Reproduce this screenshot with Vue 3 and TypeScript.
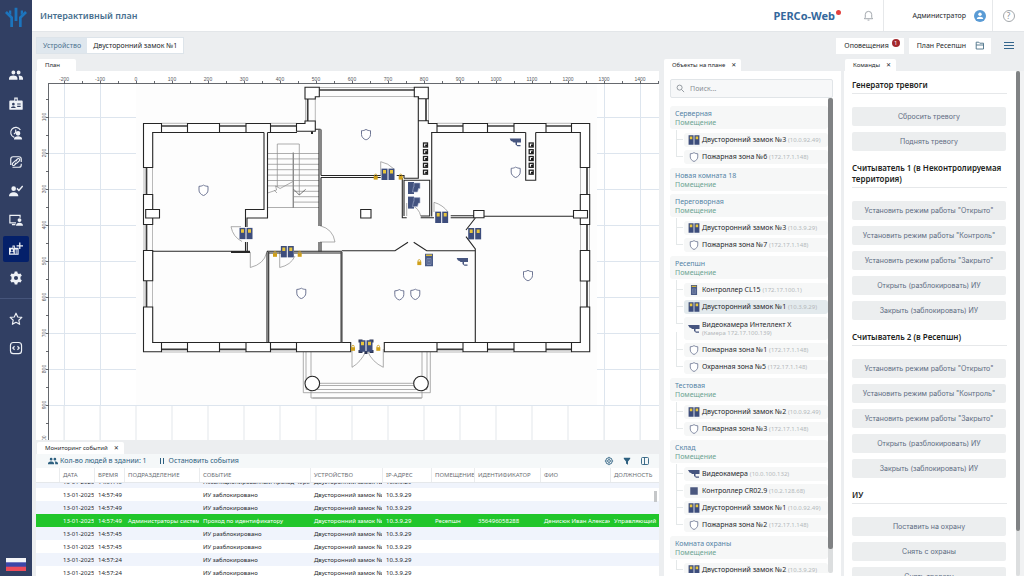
<script setup lang="ts">
import { ref } from 'vue'

type Kind = 'lock' | 'shield' | 'controller' | 'camera' | 'reader'
interface Device { kind: Kind; name: string; note: string; active?: boolean; stacked?: boolean }
interface Room { name: string; devices: Device[] }
interface EventRow { date: string; time: string; dept: string; event: string; device: string; ip: string; room: string; id: string; person: string; post: string; pass?: boolean }

const search = ref('')

const navIcons = ['people', 'badge', 'clock', 'link', 'check', 'screen', 'plan', 'gear']

const rooms: Room[] = [
  { name: 'Серверная', devices: [
    { kind: 'lock', name: 'Двусторонний замок №3', note: '(10.0.92.49)' },
    { kind: 'shield', name: 'Пожарная зона №6', note: '(172.17.1.148)' },
  ] },
  { name: 'Новая комната 18', devices: [] },
  { name: 'Переговорная', devices: [
    { kind: 'lock', name: 'Двусторонний замок №3', note: '(10.3.9.29)' },
    { kind: 'shield', name: 'Пожарная зона №7', note: '(172.17.1.148)' },
  ] },
  { name: 'Ресепшн', devices: [
    { kind: 'controller', name: 'Контроллер CL15', note: '(172.17.100.1)' },
    { kind: 'lock', name: 'Двусторонний замок №1', note: '(10.3.9.29)', active: true },
    { kind: 'camera', name: 'Видеокамера Интеллект X', note: '(Камера 172.17.100.139)', stacked: true },
    { kind: 'shield', name: 'Пожарная зона №1', note: '(172.17.1.148)' },
    { kind: 'shield', name: 'Охранная зона №5', note: '(172.17.1.148)' },
  ] },
  { name: 'Тестовая', devices: [
    { kind: 'lock', name: 'Двусторонний замок №2', note: '(10.0.92.49)' },
    { kind: 'shield', name: 'Пожарная зона №3', note: '(172.17.1.148)' },
  ] },
  { name: 'Склад', devices: [
    { kind: 'camera', name: 'Видеокамера', note: '(10.0.100.132)' },
    { kind: 'reader', name: 'Контроллер CR02.9', note: '(10.2.128.68)' },
    { kind: 'lock', name: 'Двусторонний замок №1', note: '(10.0.92.49)' },
    { kind: 'shield', name: 'Пожарная зона №2', note: '(172.17.1.148)' },
  ] },
  { name: 'Комната охраны', devices: [
    { kind: 'lock', name: 'Двусторонний замок №2', note: '(10.3.9.29)' },
  ] },
]

const readerCommands = [
  'Установить режим работы "Открыто"',
  'Установить режим работы "Контроль"',
  'Установить режим работы "Закрыто"',
  'Открыть (разблокировать) ИУ',
  'Закрыть (заблокировать) ИУ',
]
const commandGroups = [
  { title: 'Генератор тревоги', commands: ['Сбросить тревогу', 'Поднять тревогу'] },
  { title: 'Считыватель 1 (в Неконтролируемая территория)', commands: readerCommands },
  { title: 'Считыватель 2 (в Ресепшн)', commands: readerCommands },
  { title: 'ИУ', commands: ['Поставить на охрану', 'Снять с охраны', 'Снять тревогу'] },
]

const columns = ['', 'ДАТА', 'ВРЕМЯ', 'ПОДРАЗДЕЛЕНИЕ', 'СОБЫТИЕ', 'УСТРОЙСТВО', 'IP-АДРЕС', 'ПОМЕЩЕНИЕ', 'ИДЕНТИФИКАТОР', 'ФИО', 'ДОЛЖНОСТЬ']
const row = (time: string, event: string, extra: Partial<EventRow> = {}): EventRow => ({
  date: '13-01-2025', time, dept: '', event, device: 'Двусторонний замок №1', ip: '10.3.9.29', room: '', id: '', person: '', post: '', ...extra,
})
const events: EventRow[] = [
  row('14:57:45', 'Несанкционированный проход через ИУ'),
  row('14:57:49', 'ИУ заблокировано'),
  row('14:57:49', 'ИУ заблокировано'),
  row('14:57:49', 'Проход по идентификатору', { dept: 'Администраторы системы', room: 'Ресепшн', id: '356496058288', person: 'Денисюк Иван Александрович', post: 'Управляющий', pass: true }),
  row('14:57:45', 'ИУ разблокировано'),
  row('14:57:45', 'ИУ разблокировано'),
  row('14:57:24', 'ИУ заблокировано'),
  row('14:57:24', 'ИУ заблокировано'),
]
const cells = (e: EventRow): string[] => ['', e.date, e.time, e.dept, e.event, e.device, e.ip, e.room, e.id, e.person, e.post]

// Rulers: 36 units of the drawing stand for 100 units of the plan.
const topLabels = Array.from({ length: 17 }, (_, i) => ({ x: 64 + i * 36, text: String((i - 2) * 100) }))
const topTicks = Array.from({ length: 34 }, (_, i) => 64 + i * 18).filter((x) => x < 659)
const leftLabels = Array.from({ length: 10 }, (_, i) => ({ y: 117 + i * 36, text: String((i + 1) * 100) }))
const leftTicks = Array.from({ length: 19 }, (_, i) => 99 + i * 18)

const stairs = Array.from({ length: 11 }, (_, i) => 153.5 + i * 5.4)
const vents = [145, 151.7, 158.5, 165.3, 172.2]

// Windows in the horizontal walls (x from, x to) and in the vertical ones (y from, y to).
const windowsX: [number, number][] = [[161.5, 187.5], [219.5, 246], [270.5, 296.5], [437, 463], [487.5, 514], [546, 571.5]]
const windowsY: [number, number][] = [[167.5, 194.5], [224.5, 250.5], [281, 307]]

const planLocks = [[246, 233.5], [287.3, 251.7], [388, 174.2], [441.7, 217.3], [474.7, 233.8], [366, 346]]
const padlocks = [[275, 254], [299.7, 254], [375.7, 176.8], [400.7, 176.8], [419.3, 262.3], [353, 348], [378.3, 348]]
const planShields = [[203.5, 190.2], [366, 134.6], [515.7, 172.2], [301.3, 293.3], [399.3, 294.7], [415.3, 294.3], [528, 275.5]]
const planCameras = [[515.5, 142.5], [462.5, 262]]
const computers = [[414, 188], [414, 202.6]]
</script>

<template>
  <div class="app">
    <svg class="defs" aria-hidden="true">
      <symbol id="i-lock" viewBox="0 0 14 12">
        <path fill="#3d4d7c" d="M.5.3h6v11.4h-6zM7.5.3h6v11.4h-6z" />
        <path fill="#e8c53c" d="M2 1.800h3v3.400H2zM9 1.800h3v3.400H9z" />
      </symbol>
      <symbol id="i-shield" viewBox="0 0 12 12">
        <path fill="#fff" stroke="#5d6788" stroke-width=".9" d="M6 .8C4.700 1.800 3 2.100 1.500 2.100v3.800c0 2.500 1.800 4.300 4.500 5.500 2.700-1.200 4.500-3 4.500-5.500V2.100C9 2.100 7.300 1.800 6 .8z" />
      </symbol>
      <symbol id="i-controller" viewBox="0 0 8 13">
        <path fill="#4a5b86" d="M0 0h8v13H0z" />
        <path fill="#d9b93a" d="M1 1h6v1.500H1z" />
        <path fill="none" stroke="#8d9abb" stroke-width=".7" d="M2 5h4v6H2zM3 6.500h2M3 8h2M3 9.500h2" />
      </symbol>
      <symbol id="i-camera" viewBox="0 0 12 9">
        <path fill="#46557f" d="M0 .5h11.500v4H4L3 3.500 1.500 3zM6 4.500h1.500V7H11v1.300H8L6 6.500z" />
      </symbol>
      <symbol id="i-reader" viewBox="0 0 12 12"><path fill="#4b587f" d="M1.500 1.500h9v9h-9z" /></symbol>
      <symbol id="i-people" viewBox="0 0 24 24">
        <path fill="currentColor" d="M7.500 11a3.300 3.300 0 1 0 0-6.600 3.300 3.300 0 0 0 0 6.600zm9 0a3.300 3.300 0 1 0 0-6.600 3.300 3.300 0 0 0 0 6.600zM7.500 13C4.500 13 0 14.300 0 17.500V20h14.500v-2.500C14.500 14.300 10.500 13 7.500 13zm9.500 0-1 .1c1 1 1.300 2.500 1.300 4.400V20H24v-2.500c0-3.200-4-4.500-7-4.500z" />
      </symbol>
    </svg>

    <nav class="side" aria-label="Главное меню">
      <svg class="logo" viewBox="0 0 22 20" fill="#1c74bd">
        <path d="M9.600.8h2.800V14H9.600zM0 6l1.900-2L8 10v10H5.300v-8.700zM22 6l-1.900-2L14 10v10h2.700v-8.700zM4 3.500h2.300V8L4 6zM18 3.500h-2.300V8L18 6z" />
      </svg>
      <div class="nav">
        <button v-for="n in navIcons" :key="n" type="button" :class="{ on: n === 'plan' }" :aria-label="n">
          <svg viewBox="0 0 24 24" fill="none" stroke="currentColor" stroke-width="2">
            <use v-if="n === 'people'" href="#i-people" stroke="none" />
            <template v-else-if="n === 'badge'">
              <path fill="currentColor" stroke="none" fill-rule="evenodd" d="M9 1h6v5h7a1.500 1.500 0 0 1 1.500 1.500v13A1.500 1.500 0 0 1 22 22H2a1.500 1.500 0 0 1-1.500-1.500v-13A1.500 1.500 0 0 1 2 6h7zm2 2v4h2V3zM7.500 10a2.300 2.300 0 1 0 0 4.600 2.300 2.300 0 0 0 0-4.600zM3.500 19h8c0-2-2-3.200-4-3.200s-4 1.200-4 3.200zM14 11v2h6v-2zm0 4v2h6v-2z" />
            </template>
            <template v-else-if="n === 'clock'">
              <path d="M19.500 7A8.800 8.800 0 1 0 9 19.500M11.500 6v5l-3 3" /><path fill="currentColor" stroke="none" d="M15.500 16.500a4 4 0 1 0 0-8 4 4 0 0 0 0 8zM8.500 23c0-4 3-5.300 7-5.300s7 1.300 7 5.300z" />
            </template>
            <template v-else-if="n === 'link'">
              <path d="M21 15v2a4 4 0 0 1-4 4H6M3 17V7a4 4 0 0 1 4-4h10a4 4 0 0 1 4 4v5" /><path d="m11 10 4-3.500c2-1.500 4.500 1 3 3L14 13.500c-1.500 1.500-3 1-3.500 0M13 14l-4 3.500c-2 1.500-4.500-1-3-3L10 10.500c1.500-1.500 3-1 3.500 0" />
            </template>
            <template v-else-if="n === 'check'">
              <path fill="currentColor" stroke="none" d="M8 12a4 4 0 1 0 0-8 4 4 0 0 0 0 8zM0 21c0-5 4-7 8-7s8 2 8 7z" /><path stroke-width="2.500" d="m13.500 7.500 3.500 3.500 6.500-7.500" />
            </template>
            <template v-else-if="n === 'screen'">
              <path d="M12 17H1.500V4H19v4M5 20h6" /><path fill="currentColor" stroke="none" d="M18 15.500a3.300 3.300 0 1 0 0-6.600 3.300 3.300 0 0 0 0 6.600zM12 22c0-4 2.500-5.300 6-5.300s6 1.300 6 5.300z" />
            </template>
            <template v-else-if="n === 'plan'">
              <path fill="currentColor" stroke="none" fill-rule="evenodd" d="M6 6h4v4h6.500v12H0V10h6zm1.500 1.500v3h1v-3zM5 12.500a1.800 1.800 0 1 0 0 3.600 1.800 1.800 0 0 0 0-3.600zM2 19.500h6c0-2-1.500-2.700-3-2.700s-3 .7-3 2.700zM10 13v7h1.500v-7zm3 0v7h1.500v-7z" /><path stroke-width="2.200" d="M18.500 1v11M13 6.500h11" />
            </template>
            <path v-else fill="currentColor" stroke="none" fill-rule="evenodd" d="M9.800 1h4.400l.6 3 2 1.200 3-1 2.200 3.800-2.300 2v4l2.300 2-2.200 3.800-3-1-2 1.200-.6 3H9.800l-.6-3-2-1.200-3 1L2 16l2.300-2v-4L2 8l2.200-3.800 3 1 2-1.200zM12 8.500a3.500 3.500 0 1 0 0 7 3.500 3.500 0 0 0 0-7z" />
          </svg>
        </button>
      </div>
      <div class="nav extra">
        <button type="button" aria-label="Избранное"><svg viewBox="0 0 24 24" fill="none" stroke="currentColor" stroke-width="2" stroke-linejoin="round"><path d="m12 2 3 6.500 7 .8-5.200 4.800 1.400 7L12 17.600l-6.200 3.500 1.400-7L2 9.300l7-.8z" /></svg></button>
        <button type="button" aria-label="Код"><svg viewBox="0 0 24 24" fill="none" stroke="currentColor" stroke-width="2"><rect x="2.500" y="2.500" width="19" height="19" rx="5" /><path d="m9.500 9-3 3 3 3M14.500 9l3 3-3 3" /></svg></button>
      </div>
      <svg class="flag" viewBox="0 0 20 13"><path fill="#f4f5f8" d="M0 0h20v5H0z" /><path fill="#3c46a8" d="M0 4.300h20V9H0z" /><path fill="#ee4b5a" d="M0 8.700h20V13H0z" /></svg>
    </nav>

    <div class="main">
      <header class="head">
        <h1>Интерактивный план</h1>
        <div class="brand">PERCo-Web<i></i></div>
        <button class="bell" type="button" aria-label="Уведомления"><svg viewBox="0 0 12 12" fill="none" stroke="#9aa0a6"><path d="M1.500 9.500h9L9.500 8V5a3.500 3.500 0 0 0-7 0v3zM5 11h2" /></svg></button>
        <button class="user" type="button">Администратор
          <svg viewBox="0 0 12 12"><circle cx="6" cy="6" r="6" fill="#5a9bd5" /><circle cx="6" cy="4.300" r="1.700" fill="#fff" /><path fill="#fff" d="M2.800 9c0-1.600 1.500-2.300 3.200-2.300S9.200 7.400 9.200 9z" /></svg>
        </button>
        <button class="help" type="button" aria-label="Справка"><span>?</span></button>
      </header>

      <div class="bar">
        <div class="crumb"><span class="key">Устройство</span><button type="button">Двусторонний замок №1</button></div>
        <button class="chip alerts" type="button">Оповещения<b>1</b></button>
        <button class="chip" type="button">План Ресепшн
          <svg viewBox="0 0 10 9" fill="none" stroke="#4a7187" stroke-width=".9"><path d="M1.200 8V1.200h2.600l1 1h3.700V8zM1.200 4h7.300" /></svg>
        </button>
        <button class="burger" type="button" aria-label="Меню"><i></i><i></i><i></i></button>
      </div>

      <div class="work">
        <div class="left">
          <section class="pane plan">
            <div class="tab">План</div>
            <div class="body">
              <svg class="canvas" viewBox="36 71 623 369" preserveAspectRatio="xMinYMin slice">
                <g stroke="#dde5ee">
                  <path v-for="x in [64.5, 100.500, 604.500, 640.500]" :key="x" :d="`M${x} 84V440`" />
                  <path v-for="l in leftLabels" :key="l.y" :d="`M49 ${l.y + .5}H659`" />
                </g>
                <path v-for="l in topLabels" :key="l.x" :d="`M${l.x} 406V440`" stroke="#eceff2" stroke-width="1.500" />
                <path fill="#fdfdfd" d="M136 84H597V405H136z" />
                <g stroke="#55585d" stroke-width=".9">
                  <path d="M49 83.500H658M48.500 83V440" />
                  <path v-for="x in topTicks" :key="x" :d="`M${x + .5} 81V84`" />
                  <path v-for="y in leftTicks" :key="y" :d="`M46 ${y + .5}H49`" />
                </g>
                <g class="ruler">
                  <text v-for="l in topLabels" :key="l.x" :x="l.x" y="81">{{ l.text }}</text>
                  <text v-for="l in leftLabels" :key="l.y" :transform="`translate(46 ${l.y}) rotate(-90)`">{{ l.text }}</text>
                </g>

                <!-- light outlines: porch, stairs, door swings -->
                <g fill="none" stroke="#8b8b8b" stroke-width=".7">
                  <path d="M303.300 352V392.700H430.300V352M306 352V389.500H427V352M311 352V398H422V352M319 383.300H414M319 385.500H414M312.500 398H421.500" />
                  <path v-for="y in stairs" :key="y" :d="y < 190 || y > 206 ? `M267.500 ${y}H319` : `M293.500 ${y}H319`" />
                  <path d="M277.300 187V144H299.300V195M267.600 193l9-3-1-4 4.500 2.500L293 181.500M274 190l3 3" />
                  <path d="M293.300 152.500V208" stroke-width="1.400" />
                  <path d="M293.700 189.300l5.600 5.700 6.400-5.700" stroke="#444" />
                  <path d="M241 226.700H231Q233 237 242 241.500M320 225.700Q333 229 335 242H320M250.300 252V267.500Q264 264 266.500 253M279.700 252V267.500Q291 265 295 256M380.700 175V161.700Q388 163 394 169M434 212V202.300Q443 205 448 212M406.700 216V203M411 205Q419 208 420.700 216M352 349V367.300Q361 362 366 351M383.300 349V367.300Q372 362 367.500 351" />
                </g>
                <g stroke="#9b9b9b" stroke-width=".7">
                  <template v-for="w in windowsX" :key="w[0]">
                    <path :d="`M${w[0]} 123.300H${w[1]}M${w[0]} 352H${w[1]}`" />
                  </template>
                  <template v-for="w in windowsY" :key="w[0]">
                    <path :d="`M144 ${w[0]}V${w[1]}M152.500 ${w[0]}V${w[1]}M589.500 ${w[0]}V${w[1]}M580.500 ${w[0]}V${w[1]}`" />
                  </template>
                  <path d="M319 87.500H415M319 96.500H415M315.300 99V121M305.500 99V121M428.500 99V121" />
                </g>
                <g stroke="#3a3a3a" stroke-width="1.700">
                  <template v-for="w in windowsX" :key="w[0]">
                    <path :d="`M${w[0]} 126H${w[1]}M${w[0]} 349.300H${w[1]}`" />
                  </template>
                  <template v-for="w in windowsY" :key="w[0]">
                    <path :d="`M146.500 ${w[0]}V${w[1]}M587 ${w[0]}V${w[1]}`" />
                  </template>
                  <path d="M319 90H415M307.700 99V121M426 99V121" />
                </g>

                <!-- load-bearing walls -->
                <g fill="#fff" stroke="#262626" stroke-width="1.100">
                  <path d="M143.500 123.500H161.500V132.500H152.700V167.500H143.500zM187.500 123.500H219.500V132.500H187.500zM143.500 194.500H152.700V224.500H143.500zM143.500 250.500H152.700V280.700H143.500zM143.500 307H152.700V342.500H161.500V351.700H143.500z" />
                  <path d="M187.500 342.500H219.500V351.700H187.500zM246 342.500H270.500V351.700H246zM296.500 342.500H350.700V351.700H296.500zM384.300 342.500H437V351.700H384.300zM463 342.500H487.500V351.700H463zM514 342.500H546V351.700H514z" />
                  <path d="M571.500 123.500H589.700V167.500H580.300V132.500H571.500zM463 123.500H487.500V132.500H463zM580.300 194.500H589.700V224.500H580.300zM580.300 250.500H589.700V281H580.300zM580.300 307H589.700V351.700H571.500V342.500H580.300z" />
                  <path d="M305 87.300H319.300V96.700H315.300V99H305zM414.300 87.300H428.300V98.700H418.500V96.700H414.300zM305 121H315.300V131.300H296.500V123.500H305z" />
                  <path d="M145.700 209.500H159.500V218H145.700zM573.500 210.500H587.500V218H573.500zM473.700 210.500H484V217.700H473.700zM360.700 209.500H371V218H360.700z" />
                  <circle cx="312.300" cy="383.500" r="7.300" /><circle cx="421" cy="383.500" r="7.300" />
                </g>
                <g fill="none" stroke="#262626" stroke-width="1.100">
                  <path d="M264 132.500H246V123.500H270.500V132.500H267.500M152.700 132.500H264M267.500 132.500H297M431.700 132.500H525.700M535.700 132.500H580.500M514 132.500V123.500H546V132.500M152.700 342.500H350M384 342.500H580.500" />
                  <path d="M264 132.500V209.500H245.500V227M267.500 132.500V218H247V227M245.500 242V251M247.300 242V251M152.700 251.300H250M315 129.300H320.500M319 130V226M321 129.500V175.500M321 177.500V226M319 242V251.500M321 242V251.500" />
                  <path d="M321 175.500H380.700M321 177.500H380.700M396.700 175.500H404V178.300M418.300 97V178.300H404M418.300 120.700H428.300V123.500H437V132.500H431.700V216.500M402.300 178V217.700H406.700M404 216V180.200H429.700V216H420.700M420.700 217.700H434M450.700 215.700H474M450.700 217.700H474M484 216.300H573" />
                  <path d="M525.700 132.500V180.300H535.700V132.500" />
                  <path d="M267 251.500V342.500M268.700 252V342.500M267 251.300H281M268.700 253H281M294 251.300H342M294 253H341M342 250.800H395L408 242.300M413.700 242.300L426.700 250.800H475.300M475.300 218L466 230M466 236.700L475.300 249V342.500" />
                  <path d="M231 252H250" stroke-width="2" /><path d="M341.500 252V342.500" stroke="#555" stroke-width="2.200" />
                  <path d="M312 131.500V134" stroke-width="2" />
                </g>
                <g v-for="y in vents" :key="y" fill="#fff" stroke="#222" stroke-width="1.300">
                  <rect x="423.500" :y="y - 2" width="4" height="4" /><rect x="529.200" :y="y - 2" width="4" height="4" />
                  <path fill="#111" stroke="none" :d="`M425.200 ${y - .5}h2v2h-2zM531 ${y - .5}h2v2h-2z`" />
                </g>

                <!-- devices -->
                <path fill="#2c3554" d="M358.500 339.500h4v3h-4zM369.500 339.500h4v3h-4zM358.500 350h4v3h-4zM369.500 350h4v3h-4zM364.500 351h3v3h-3z" />
                <use v-for="p in planLocks" :key="p.join()" href="#i-lock" :x="p[0] - 7" :y="p[1] - 6" width="14" height="12" />
                <use v-for="p in planShields" :key="p.join()" href="#i-shield" :x="p[0] - 6.500" :y="p[1] - 6" width="13" height="12" />
                <use v-for="p in planCameras" :key="p.join()" href="#i-camera" :x="p[0] - 6" :y="p[1] - 4.500" width="12" height="9" />
                <use href="#i-controller" x="425" y="253.500" width="8" height="13" />
                <g v-for="p in padlocks" :key="p.join()" :transform="`translate(${p[0]} ${p[1]})`">
                  <path d="M-1.200-.5v-1a1.200 1.200 0 0 1 2.400 0v1" fill="none" stroke="#c79a1c" stroke-width=".8" /><path fill="#cf9f18" d="M-2-.8h4v3.600h-4z" />
                </g>
                <g v-for="p in computers" :key="p.join()" :transform="`translate(${p[0]} ${p[1]})`" fill="#42527f">
                  <path d="M-6-6H0V6H-6z" /><path stroke="#a9b4cf" stroke-width=".6" d="M0-5h6v5.500H4.500L3.500 4h-5l1-5H0z" />
                </g>
              </svg>
            </div>
          </section>

          <section class="pane events">
            <div class="tab">Мониторинг событий<button type="button" class="x" aria-label="Закрыть">✕</button></div>
            <div class="body">
              <div class="tools">
                <svg class="ppl" viewBox="0 0 24 24"><use href="#i-people" /></svg>
                <span class="count">Кол-во людей в здании: 1</span>
                <button type="button" class="pause"><i></i>Остановить события</button>
                <button type="button" aria-label="Настройки"><svg viewBox="0 0 10 10" fill="none" stroke="currentColor" stroke-width=".9"><circle cx="5" cy="5" r="3.300" /><circle cx="5" cy="5" r="1.400" /><path stroke-width=".6" d="M5 .8v1.500M5 7.700v1.500M.8 5h1.500M7.700 5h1.500" /></svg></button>
                <button type="button" aria-label="Фильтр"><svg viewBox="0 0 10 10" fill="currentColor"><path d="M1.800 1.800h6.400v1L6 5.500v3.300L4 7.600V5.500L1.800 2.800z" /></svg></button>
                <button type="button" aria-label="Колонки"><svg viewBox="0 0 10 10" fill="none" stroke="currentColor" stroke-width=".9"><rect x="1.500" y="1.500" width="7" height="7" rx="1" /><path d="M4.500 1.500v7" /></svg></button>
              </div>
              <table>
                <thead><tr><th v-for="c in columns" :key="c">{{ c }}</th></tr></thead>
                <tbody>
                  <tr v-for="(e, i) in events" :key="i" :class="{ pass: e.pass }"><td v-for="(c, j) in cells(e)" :key="j">{{ c }}</td></tr>
                </tbody>
              </table>
              <i class="thumb"></i>
            </div>
          </section>
        </div>

        <section class="pane objects">
          <div class="tab">Объекты на плане<button type="button" class="x" aria-label="Закрыть">✕</button></div>
          <div class="body">
            <label class="search">
              <svg viewBox="0 0 10 10" fill="none" stroke="#8b9299"><circle cx="4" cy="4" r="2.800" /><path d="m6 6 3 3" /></svg>
              <input v-model="search" type="text" placeholder="Поиск..." aria-label="Поиск">
            </label>
            <div class="scroll">
              <div class="list">
                <div v-for="r in rooms" :key="r.name" class="room">
                  <div class="title"><span>{{ r.name }}</span><em>Помещение</em></div>
                  <ul v-if="r.devices.length">
                    <li v-for="d in r.devices" :key="d.name" :class="{ active: d.active, stacked: d.stacked }">
                      <svg :class="d.kind"><use :href="`#i-${d.kind}`" /></svg>
                      <span>{{ d.name }} <small>{{ d.note }}</small></span>
                    </li>
                  </ul>
                </div>
              </div>
              <div class="track"><i></i></div>
            </div>
          </div>
        </section>

        <section class="pane commands">
          <div class="tab">Команды<button type="button" class="x" aria-label="Закрыть">✕</button></div>
          <div class="body">
            <div class="groups">
              <div v-for="g in commandGroups" :key="g.title" class="group">
                <h2>{{ g.title }}</h2>
                <button v-for="c in g.commands" :key="c" type="button">{{ c }}</button>
              </div>
            </div>
            <div class="track"><i></i></div>
          </div>
        </section>
      </div>
    </div>
  </div>
</template>

<style>
html, body, #app { height: 100%; }
</style>

<style scoped>
* { box-sizing: border-box; }
.app { display: grid; grid-template-columns: 32px minmax(0, 1fr); height: 100vh; overflow: hidden; background: #eceef0; color: #25282c; font: 7px/10px "Noto Sans", "Open Sans", sans-serif; }
.defs { position: absolute; width: 0; height: 0; }
button { border: 0; padding: 0; background: none; color: inherit; font: inherit; }
i, em { font-style: normal; }
svg { display: block; flex: none; }

.side { display: flex; flex-direction: column; align-items: center; background: #313f63; color: #eef1f6; }
.logo { width: 22px; height: 20px; margin: 7px 0 35px; }
.nav { display: flex; flex-direction: column; align-items: center; gap: 3px; width: 100%; }
.nav button { display: grid; place-items: center; width: 26px; height: 26px; border-radius: 2px; }
.nav button.on { background: #04206a; }
.nav svg { width: 14px; height: 14px; }
.extra { margin-top: 7px; padding-top: 7px; border-top: 1px solid #46557b; }
.flag { width: 20px; height: 13px; margin: auto 0 5px; }

.main { display: flex; flex-direction: column; min-width: 0; min-height: 0; }
.head { display: flex; align-items: stretch; height: 32px; background: #fff; border-bottom: 1px solid #e3e6e9; }
.head > * { display: flex; align-items: center; }
h1 { flex: 1; margin: 0; padding-left: 8px; color: #48708f; font-size: 9px; font-weight: 600; }
.brand { margin-right: 22px; color: #34689c; font-size: 11px; font-weight: 700; }
.brand i { width: 5px; height: 5px; margin: -6px 0 0 1px; border-radius: 50%; background: #e2413f; }
.bell { justify-content: flex-start; width: 20px; }
.bell svg { width: 11px; height: 11px; }
.user { justify-content: flex-end; gap: 8px; width: 110px; padding-right: 6px; border: solid #e6e8ea; border-width: 0 1px; font-size: 7px; }
.user svg { width: 12px; height: 12px; }
.help { justify-content: center; width: 31px; color: #888d92; font-size: 8px; }
.help span { width: 12px; height: 12px; border: 1px solid #a3a7ab; border-radius: 50%; }

.bar { display: flex; align-items: center; gap: 5px; height: 27px; padding: 0 10px 0 4px; font-size: 7px; }
.crumb { display: flex; height: 17px; margin-right: auto; border: 1px solid #dde4ea; background: #fff; }
.crumb > * { display: flex; align-items: center; padding: 0 6px; }
.key { background: #dfe7ee; color: #4c7390; }
.chip { position: relative; display: flex; align-items: center; gap: 9px; height: 16px; padding: 0 6px 0 8px; background: #fff; }
.alerts { padding-right: 15px; }
.alerts b { position: absolute; top: 1px; right: 4px; width: 8px; height: 8px; border-radius: 50%; background: #a3282d; color: #fff; font-size: 6px; line-height: 8px; font-weight: 400; }
.chip svg { width: 10px; height: 9px; }
.burger { display: flex; flex-direction: column; gap: 2px; width: 10px; margin-left: 8px; }
.burger i { height: 1px; background: #33658c; }

.work { flex: 1; display: grid; grid-template-columns: minmax(0, 1fr) 180px 180px; min-height: 0; }
.left { display: flex; flex-direction: column; min-height: 0; margin: 0 5px 0 4px; }
.pane { display: flex; flex-direction: column; align-items: flex-start; min-height: 0; }
.plan { flex: 1; }
.tab { display: flex; align-items: center; gap: 6px; flex: none; height: 12px; margin-left: 1px; padding: 0 5px 0 8px; border-radius: 2px 2px 0 0; background: #fff; font-size: 6px; }
.x { font: 6px/10px "DejaVu Sans", sans-serif; }
.body { flex: 1; align-self: stretch; min-height: 0; background: #fff; overflow: hidden; }
.plan .tab { padding-right: 16px; }
.canvas { width: 100%; height: 100%; }
.ruler { fill: #55585d; font: 5px "Liberation Sans", sans-serif; text-anchor: middle; }

.events { height: 136px; padding-top: 2px; }
.events .body { position: relative; }
.tools { display: flex; align-items: center; height: 14px; padding: 0 9px 0 12px; background: #f5f8f9; color: #2d6080; font-size: 7px; }
.ppl { margin-right: 2px; }
.pause { display: flex; align-items: center; margin: 0 auto 0 13px; }
.pause i { width: 4px; height: 6px; margin-right: 5px; border: solid #2d6080; border-width: 0 1px; }
.tools svg { width: 10px; height: 10px; }
.count { white-space: nowrap; }
.pause ~ button { margin-left: 8px; }
table, thead, tbody { display: block; }
table { font-size: 6px; }
thead { position: relative; background: #fff; border-bottom: 1px solid #e5e8eb; }
tr { display: grid; grid-template-columns: 24px 35px 30px 75px minmax(0, 1fr) 72px 49px 43px 66px 70px 48px; height: 13px; line-height: 14px; }
thead tr { height: 14px; line-height: 14px; }
th, td { overflow: hidden; padding: 0 1px 0 3px; white-space: nowrap; text-align: left; font-weight: 400; }
td { margin-right: 1px; }
th { padding-right: 0; border-right: 1px solid #eaecee; color: #6a6e73; }
th:last-child { border-right: 0; }
tbody { margin-top: -8px; }
tbody tr:nth-child(odd) { background: #f0f4fc; }
tbody tr.pass { background: #21c62b; color: #fff; }
.thumb { position: absolute; top: 37px; right: 2px; width: 3px; height: 11px; background: #c5c7c9; }

.objects { margin-right: 3px; }
.objects .body { display: flex; flex-direction: column; padding: 8px 8px 3px 6px; }
.objects .tab { margin-left: 0; }
.search { display: flex; align-items: center; gap: 5px; flex: none; height: 19px; padding-left: 5px; border: 1px solid #e1e5e8; border-radius: 2px; background: #f7f8f9; }
.search svg { width: 9px; height: 9px; }
.search input { flex: 1; min-width: 0; border: 0; padding: 0; outline: 0; background: none; font: inherit; }
.search input::placeholder { color: #8b9096; opacity: 1; }
.scroll { flex: 1; display: flex; min-height: 0; }
.list { flex: 1; min-width: 0; padding-top: 8px; overflow: hidden; }
.track { width: 5px; border-radius: 2px; background: #dcdedf; }
.track i { display: block; height: 95%; border-radius: 2px; background: #808284; }
.title { display: flex; flex-direction: column; height: 23px; margin-bottom: 3px; padding: 3px 5px 0; border-radius: 3px; background: #f6f7f7; color: #5383a6; line-height: 9px; }
.title em { color: #6ba392; }
ul { display: flex; flex-direction: column; gap: 3px; margin: 0 0 0 5px; padding: 1px 0 4px 9px; list-style: none; }
li { position: relative; display: flex; align-items: center; height: 14px; padding-left: 4px; border-radius: 3px; background: #f6f7f7; white-space: nowrap; line-height: 9px; }
li::before { content: ""; position: absolute; left: -8px; top: -11px; width: 6px; height: 17px; border: solid #e4e8e9; border-width: 0 0 1px 1px; }
li:first-child::before { top: -3px; height: 9px; }
li.active { background: #e3eaed; }
li.stacked { height: 23px; }
li.stacked small { display: block; }
li svg { width: 12px; height: 10px; margin-right: 2px; }
small { color: #b4b8bb; font-size: 6px; }

.commands .tab { margin-left: 1px; }
.commands .body { display: flex; padding-right: 4px; background: #f1f2f3; }
.groups { flex: 1; min-width: 0; height: 100%; padding: 8px 10px 0 8px; overflow: hidden; background: #fff; }
.group { display: flex; flex-direction: column; gap: 6px; margin-bottom: 11px; }
h2 { margin: 0 -1px 7px 0; padding-bottom: 3px; border-bottom: 1px solid #e6e8ea; color: #1d1f22; font-size: 8px; line-height: 11px; font-weight: 600; }
.group button { height: 19px; border-radius: 2px; background: #eceeef; color: #5d6c82; font: 7px Inter, "Liberation Sans", Arial, sans-serif; }
.commands .track { width: 4px; }
.commands .track i { height: 91%; }
</style>
